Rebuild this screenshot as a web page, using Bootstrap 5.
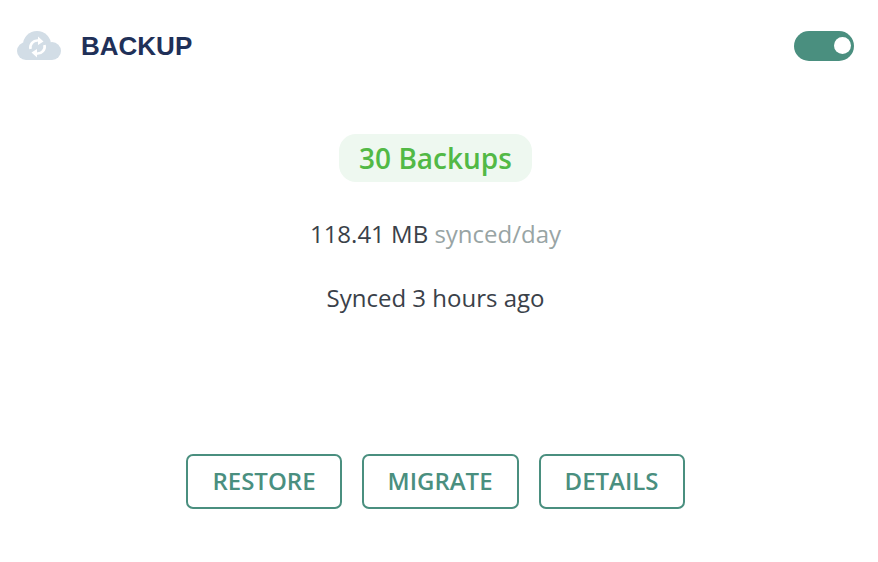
<!DOCTYPE html>
<html lang="en">
<head>
<meta charset="utf-8">
<title>Backup</title>
<link href="https://cdn.jsdelivr.net/npm/bootstrap@5.3.0/dist/css/bootstrap.min.css" rel="stylesheet">
<style>
html,body{height:100%;}
body{background:#fff;font-family:"Open Sans","Noto Sans",sans-serif;overflow:hidden;}
.panel-shell{height:562px;padding:31px 24px 53px 17px;}
.cloud-ico{width:44px;height:30px;display:block;}
.panel-title{font-family:"Liberation Sans",Arial,sans-serif;font-weight:700;font-size:26px;line-height:30px;color:#1f3058;margin-left:20px;}
.toggle-pill{width:60px;height:30px;border-radius:15px;background:#4a8f7f;padding:6px 3px 7px 6px;}
.toggle-knob{width:17px;height:17px;border-radius:50%;background:#fff;}
.count-pill{background:#eef8f0;color:#52b946;font-size:28px;font-weight:600;line-height:34px;padding:7px 20px;border-radius:17px;margin-top:73px;}
.stat-line{font-size:24px;line-height:30px;color:#3a4149;}
.stat-one{margin-top:37px;}
.stat-two{margin-top:34px;}
.stat-muted{color:#98a4a4;}
.action-btn{font-size:24px;font-weight:600;line-height:31px;color:#4a8f7f;border:2px solid #4a8f7f;border-radius:7px;padding:9px 24px 11px;background:#fff;}
.action-btn:hover{color:#4a8f7f;border-color:#4a8f7f;background:#fff;}
.action-row{gap:20px;}
</style>
</head>
<body>
<div class="panel-shell d-flex flex-column">
  <div class="d-flex align-items-center justify-content-between">
    <div class="d-flex align-items-center">
      <svg class="cloud-ico" viewBox="0 0 44 30" aria-hidden="true">
        <g fill="#d2dde6">
          <circle cx="20" cy="14" r="14"/>
          <circle cx="9" cy="20" r="9"/>
          <circle cx="35" cy="20" r="9"/>
          <rect x="9" y="18" width="26" height="11"/>
        </g>
        <g fill="none" stroke="#fff" stroke-width="2.600">
          <path d="M13.500 18A7 7 0 0 1 21 9.500"/>
          <path d="M27.500 14A7 7 0 0 1 20 22.500"/>
        </g>
        <path fill="#fff" d="M21 5.500L26.500 10.500 21 14zM20 26.500L14.500 21.500 20 18z"/>
      </svg>
      <span class="panel-title">BACKUP</span>
    </div>
    <div class="toggle-pill d-flex justify-content-end"><div class="toggle-knob"></div></div>
  </div>
  <div class="d-flex flex-column align-items-center flex-grow-1">
    <div class="count-pill">30 Backups</div>
    <div class="stat-line stat-one">118.41 MB <span class="stat-muted">synced/day</span></div>
    <div class="stat-line stat-two">Synced 3 hours ago</div>
  </div>
  <div class="d-flex justify-content-center action-row">
    <button type="button" class="btn action-btn">RESTORE</button>
    <button type="button" class="btn action-btn">MIGRATE</button>
    <button type="button" class="btn action-btn">DETAILS</button>
  </div>
</div>
<script src="https://cdn.jsdelivr.net/npm/bootstrap@5.3.0/dist/js/bootstrap.bundle.min.js"></script>
</body>
</html>
